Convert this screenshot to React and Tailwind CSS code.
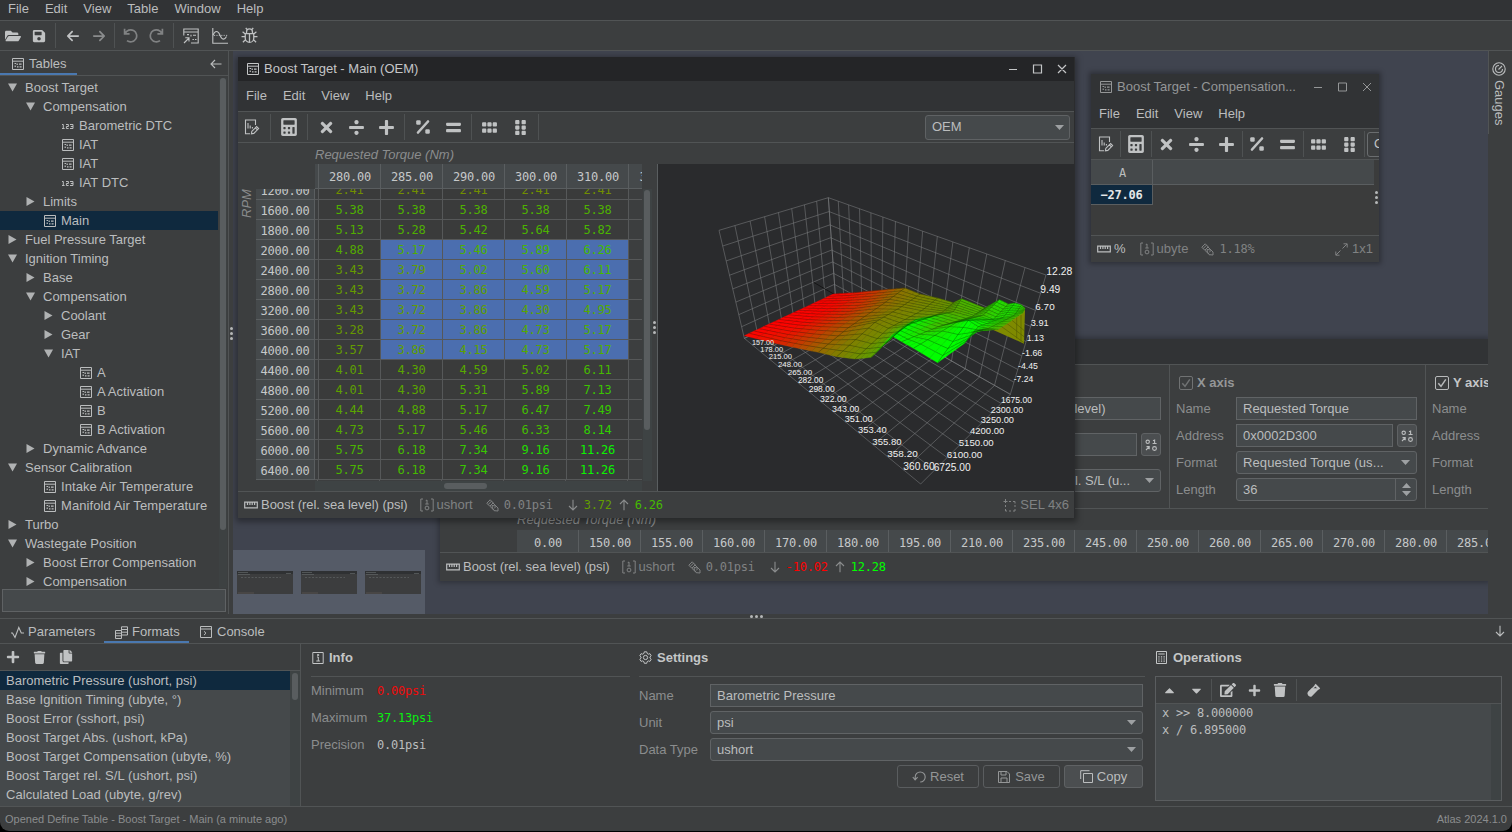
import React from "react";
import {
  FaFolderOpen, FaSave, FaCalculator, FaTimes, FaDivide, FaPlus, FaEquals,
  FaGripHorizontal, FaGripVertical, FaTrash, FaCopy, FaEdit, FaCaretUp, FaCaretDown,
} from "react-icons/fa";
import { FaArrowLeft, FaArrowRight } from "react-icons/fa6";

const MONO = "font-['DejaVu_Sans_Mono','Liberation_Mono',monospace] text-[12px] tracking-[-0.22px] whitespace-pre";

/* ---------- icons ---------- */
function Svg({ size = 14, sw = 1.1, className = "", vb = 16, children }) {
  return (
    <svg width={size} height={size} viewBox={`0 0 ${vb} ${vb}`} fill="none" stroke="currentColor" strokeWidth={sw} className={`shrink-0 ${className}`}>
      {children}
    </svg>
  );
}
const TableIcon = ({ size = 12, className }) => (
  <Svg size={size} vb={12} sw={1} className={className}>
    <path d="M.5 .5h11v11h-11zM.5 3.2h11" />
    <path d="M2.500 5.500h1.600M5.200 5.500v1.600M7 6.200h2.600M3.200 7.500v1.600M5 8.900h1.500M7.600 8.900h2" strokeWidth="1.200" />
  </Svg>
);
const NumIcon = () => (
  <svg width="12" height="12" viewBox="0 0 12 12" fill="none" stroke="currentColor" strokeWidth="1" className="shrink-0">
    <path d="M0 4.500h1.300v4M0 8.500h2.600M4 4.500h2.400v2H4.400v2h2.200M8 4.500h3v4H8M8.800 6.500H11" />
  </svg>
);
const ChangeTableIcon = () => (
  <Svg size={16} sw={1.100}>
    <path d="M.8 7.500V1h14.400v14H8M.8 4h14.400M1 15l5-5M2.300 9.800H6v3.800" />
    <path d="M4 6.600h2M8 6.800v1.600M10 7.200h3M9.500 11.500h1.400M12 11.500h1.500" />
  </Svg>
);
const ChartIcon = () => (
  <Svg size={16} sw={1.100}>
    <path d="M.8 0v15.200H16" />
    <path d="M1 7.200c2-5 5-5 7 0s4.500 5 6.500 1.200" />
    <path d="M2 7.400h14" strokeDasharray="1.200 1.200" strokeWidth=".9" />
  </Svg>
);
const BugIcon = () => (
  <Svg size={17} sw={1.200}>
    <path d="M4 6.200h8v4.300a4 4 0 0 1-8 0zM5.200 6V4.600a2.800 2.800 0 0 1 5.600 0V6M8 6.500v8M4 9H.5M12 9h3.500M4 6.500L1.500 4.500M12 6.500l2.500-2M4.300 11.800l-2.500 2.500M11.700 11.800l2.500 2.500M5.700 2.500L4.500 .8M10.300 2.500L11.500 .8" />
  </Svg>
);
const UndoIcon = ({ flip }) => (
  <Svg size={15} vb={15} sw={1.700} className={flip ? "-scale-x-100" : ""}>
    <path d="M1.600 .8v5h5M2.200 5.400A6 6 0 1 1 4 12.600" />
  </Svg>
);
const EditDocIcon = () => (
  <Svg size={16} sw={1.100}>
    <path d="M6 14.800H1.500V1H11.500V6M4 4v5.500M6.200 6.500v3M8.400 8v1.500" />
    <path d="M7.800 12.400l4.800-4.800 2 2-4.800 4.800-2.400.5zM11.400 8.800l2 2" />
  </Svg>
);
const PercentIcon = () => (
  <Svg size={16} sw={2.600}>
    <path d="M3 13.500L13 2.500" strokeLinecap="round" />
    <rect x="1.200" y="1.200" width="4.500" height="4.500" rx="1.200" fill="currentColor" stroke="none" />
    <rect x="10.300" y="10.300" width="4.500" height="4.500" rx="1.200" fill="currentColor" stroke="none" />
  </Svg>
);
const RulerIcon = () => (
  <svg width="14" height="8" viewBox="0 0 14 8" fill="none" stroke="currentColor" strokeWidth="1.200" className="shrink-0">
    <path d="M.7 1.200h12.600v5.600H.7zM3.500 1.200v2.800M5.900 1.200v2.800M8.200 1.200v2.800M10.600 1.200v2.800" />
  </svg>
);
const TypeIcon = () => (
  <Svg size={14} vb={14} sw={1}>
    <path d="M3 1H.8v12H3M11 1h2.200v12H11M5.700 2.700L7 2v4M5.300 6h3.400" />
    <circle cx="7" cy="10" r="1.900" />
  </Svg>
);
const PrecisionIcon = () => (
  <Svg size={13} vb={13} sw={1}>
    <path d="M.8 4.200L4.200 .8l3 3-3.400 3.400zM2.200 5.500l3.400-3.400M6.500 3.500l5.500 5.500M3.800 7.200l4.700 4.500M6 6.500l4 .5 2 2v3l-3.500-.3-2-2zM8 9.500l2-2" />
  </Svg>
);
const SelectIcon = () => (
  <Svg size={13} vb={13} sw={1}>
    <path d="M2.500 0v4M.5 2.500h4M6 2.500h2M10 2.500h2v2M12 6v2M12 10v2h-2M8 12H6M4 12H2.500v-2M2.500 8V6" />
  </Svg>
);
const ExpandIcon = () => (
  <Svg size={13} vb={13} sw={1}><path d="M8.500 .8h3.700v3.700M12 1L7.500 5.500M4.500 12.200H.8V8.500M1 12l4.500-4.500" /></Svg>
);
const WaveIcon = () => (
  <Svg size={13} vb={13} sw={1.100}><path d="M0 7h1.500L4 11.500 7.800 1.500 10.300 7H13" /></Svg>
);
const FormatsIcon = () => (
  <Svg size={13} vb={13} sw={1}>
    <path d="M.5 4.500h6v8h-6zM.5 7.200h6M.5 9.800h6M6.500 9H12.500V.8H6.500V4.500M6.500 3.500h6M6.500 6.200h6" />
  </Svg>
);
const ConsoleIcon = () => (
  <Svg size={12} vb={12} sw={1}><path d="M.5 .5h11v11H.5zM.5 3h11M4 5.300l2 1.900-2 1.900" /></Svg>
);
const InfoIcon = () => (
  <Svg size={12} vb={12} sw={1}><path d="M.8 .5h10.400v11H.8zM5 5h1.300v4M4.300 9h3.600M5.500 2.500h1.200v1H5.500z" /></Svg>
);
const GearIcon = () => (
  <Svg size={13} vb={16} sw={1.200}>
    <path d="M6.500 1h3l.5 2 1.500.9 2-.6 1.500 2.600L13.500 7.300v1.500l1.500 1.400-1.500 2.600-2-.6-1.500.9-.5 2h-3l-.5-2-1.500-.9-2 .6L1 10.200l1.500-1.400V7.300L1 5.900l1.500-2.600 2 .6L6 3z" />
    <circle cx="8" cy="8" r="2.600" />
  </Svg>
);
const CalcIcon = () => (
  <Svg size={13} vb={13} sw={1}>
    <path d="M1.500 .5h10v12h-10zM3.300 3h6.400" />
    <path d="M3.300 5.800h6.800M3.300 8h6.800M3.300 10.200h6.800" strokeDasharray="1.300 1.300" strokeWidth="1.200" />
  </Svg>
);
const BinIcon = () => (
  <Svg size={14} vb={14} sw={1.100}>
    <circle cx="3.700" cy="3.800" r="1.700" />
    <path d="M9 2.700l1.600-.7v3.500M8.600 5.500h4M2 12l3-3.200M2.500 8.600h2.700v2.600" />
    <circle cx="10.500" cy="10.500" r="1.900" />
  </Svg>
);
const GaugeIcon = () => (
  <Svg size={14} vb={14} sw={1.100}>
    <circle cx="7" cy="7" r="6.200" />
    <path d="M7 3.500a3.500 3.500 0 1 0 3.500 3.500M6.500 7.500l3.500-3.500" />
  </Svg>
);
const VialIcon = () => (
  <Svg size={14} vb={14} sw={1.400}>
    <path d="M1.500 9.500L8.500 2.500l3 3-7 7c-2 .8-3.800-1-3-3z" />
    <path d="M1.500 9.500L5 6h5.500l-6 6.500c-2 .8-3.800-1-3-3z" fill="currentColor" />
    <path d="M8 1.500l4.500 4.500" strokeWidth="1.800" />
  </Svg>
);
const Arrow = ({ dir, size = 12 }) => (
  <Svg size={size} vb={12} sw={1.100}>
    {dir === "down" && <path d="M6 .8v10.200M2 7l4 4 4-4" />}
    {dir === "up" && <path d="M6 11.200V1M2 5l4-4 4 4" />}
    {dir === "left" && <path d="M11.500 6H1M5 2L1 6l4 4" />}
  </Svg>
);
const Tri = ({ open }) => (
  <svg width="9" height="9" viewBox="0 0 9 9" className="shrink-0 fill-[#b0b2b3]">
    <path d={open ? "M0 .5h9L4.500 8.500z" : "M.5 0v9L8.500 4.500z"} />
  </svg>
);
const DownTri = () => <svg width="9" height="5" viewBox="0 0 9 5" className="shrink-0 fill-[#9da0a2]"><path d="M0 0h9L4.500 5z" /></svg>;

const Sep = ({ className = "" }) => <div className={`w-px shrink-0 bg-[#4f5253] ${className}`} />;
const Dots = ({ vertical }) => (
  <div className={`flex ${vertical ? "flex-col" : ""} gap-[2px]`}>
    {[0, 1, 2].map((i) => <div key={i} className="size-[3px] rounded-full bg-[#b5b7b8]" />)}
  </div>
);

/* ---------- data ---------- */
const TREE = [
  [0, "open", "Boost Target"], [1, "open", "Compensation"], [2, "num", "Barometric DTC"], [2, "table", "IAT"],
  [2, "table", "IAT"], [2, "num", "IAT DTC"], [1, "closed", "Limits"], [1, "table", "Main", true],
  [0, "closed", "Fuel Pressure Target"], [0, "open", "Ignition Timing"], [1, "closed", "Base"], [1, "open", "Compensation"],
  [2, "closed", "Coolant"], [2, "closed", "Gear"], [2, "open", "IAT"], [3, "table", "A"], [3, "table", "A Activation"],
  [3, "table", "B"], [3, "table", "B Activation"], [1, "closed", "Dynamic Advance"], [0, "open", "Sensor Calibration"],
  [1, "table", "Intake Air Temperature"], [1, "table", "Manifold Air Temperature"], [0, "closed", "Turbo"],
  [0, "open", "Wastegate Position"], [1, "closed", "Boost Error Compensation"], [1, "closed", "Compensation"],
];
const COLS = ["280.00", "285.00", "290.00", "300.00", "310.00"];
const ROWS = [
  ["1200.00", 2.41, 2.41, 2.41, 2.41, 2.41], ["1600.00", 5.38, 5.38, 5.38, 5.38, 5.38],
  ["1800.00", 5.13, 5.28, 5.42, 5.64, 5.82], ["2000.00", 4.88, 5.17, 5.46, 5.89, 6.26],
  ["2400.00", 3.43, 3.79, 5.02, 5.6, 6.11], ["2800.00", 3.43, 3.72, 3.86, 4.59, 5.17],
  ["3200.00", 3.43, 3.72, 3.86, 4.3, 4.95], ["3600.00", 3.28, 3.72, 3.86, 4.73, 5.17],
  ["4000.00", 3.57, 3.86, 4.15, 4.73, 5.17], ["4400.00", 4.01, 4.3, 4.59, 5.02, 6.11],
  ["4800.00", 4.01, 4.3, 5.31, 5.89, 7.13], ["5200.00", 4.44, 4.88, 5.17, 6.47, 7.49],
  ["5600.00", 4.73, 5.17, 5.46, 6.33, 8.14], ["6000.00", 5.75, 6.18, 7.34, 9.16, 11.26],
  ["6400.00", 5.75, 6.18, 7.34, 9.16, 11.26],
];
const BACK_COLS = ["0.00", "150.00", "155.00", "160.00", "170.00", "180.00", "195.00", "210.00", "235.00", "245.00", "250.00", "260.00", "265.00", "270.00", "280.00", "285.00"];
const FORMATS = [
  "Barometric Pressure (ushort, psi)", "Base Ignition Timing (ubyte, °)", "Boost Error (sshort, psi)",
  "Boost Target Abs. (ushort, kPa)", "Boost Target Compensation (ubyte, %)", "Boost Target rel. S/L (ushort, psi)",
  "Calculated Load (ubyte, g/rev)",
];
const heat = (t) => `rgb(${Math.round(255 * (1 - t))},${Math.round(255 * t)},0)`;
const cellColor = (v) => heat(Math.min(1, (v + 10.02) / 22.3));

/* ---------- surface plot ---------- */
function quadMap([p0, p1, p2, p3]) {
  const dx1 = p1[0] - p2[0], dx2 = p3[0] - p2[0], sx = p0[0] - p1[0] + p2[0] - p3[0];
  const dy1 = p1[1] - p2[1], dy2 = p3[1] - p2[1], sy = p0[1] - p1[1] + p2[1] - p3[1];
  const det = dx1 * dy2 - dx2 * dy1;
  const g = (sx * dy2 - dx2 * sy) / det, h = (dx1 * sy - sx * dy1) / det;
  const a = p1[0] - p0[0] + g * p1[0], b = p3[0] - p0[0] + h * p3[0];
  const d = p1[1] - p0[1] + g * p1[1], e = p3[1] - p0[1] + h * p3[1];
  return (u, v) => {
    const w = g * u + h * v + 1;
    return [(a * u + b * v + p0[0]) / w, (d * u + e * v + p0[1]) / w];
  };
}
function gridPath(corners, nu, nv) {
  const m = quadMap(corners);
  const seg = (p, q) => `M${p[0].toFixed(1)} ${p[1].toFixed(1)}L${q[0].toFixed(1)} ${q[1].toFixed(1)}`;
  let d = "";
  for (let i = 0; i <= nu; i++) d += seg(m(i / nu, 0), m(i / nu, 1));
  for (let j = 0; j <= nv; j++) d += seg(m(0, j / nv), m(1, j / nv));
  return d;
}
const P = { A: [192, 211], B: [520, 113], C: [1173, 345], a: [268, 535], b: [541, 405], c: [1066, 703], d: [797, 972] };
const GRID = gridPath([P.A, P.B, P.b, P.a], 8, 8) + gridPath([P.B, P.C, P.c, P.b], 15, 8) + gridPath([P.a, P.b, P.c, P.d], 8, 15);
const CURVES = [
  [[535, 402, 0], [600, 398, .06], [680, 390, .26], [750, 384, .46], [795, 402, .5], [848, 414, .54], [895, 428, .6], [920, 416, .72], [990, 444, .7], [1033, 419, .9], [1060, 432, .82], [1080, 429, .92], [1100, 435, .87], [1110, 445, .77]],
  [[446, 444, 0], [520, 446, .02], [600, 445, .18], [680, 435, .4], [740, 440, .5], [800, 452, .54], [860, 458, .58], [895, 455, .64], [950, 470, .72], [985, 465, .75], [1015, 478, .85], [1045, 472, .87], [1078, 466, .82], [1104, 458, .74]],
  [[357, 485, 0], [430, 495, .02], [500, 500, .17], [580, 503, .36], [660, 487, .5], [700, 505, .53], [745, 500, .7], [783, 479, 1], [850, 500, .72], [905, 487, .85], [940, 481, 1], [970, 500, .95], [1000, 505, .8], [1030, 508, .7]],
  [[268, 527, 0], [370, 552, .14], [430, 565, .28], [490, 577, .42], [545, 590, .5], [600, 597, .57], [648, 592, .62], [710, 527, 1], [740, 545, 1], [775, 565, 1], [848, 608, 1], [927, 551, 1], [948, 516, .95], [975, 512, .85]],
];
function mesh() {
  const out = [];
  const SU = 3, SV = 6;
  const at = (r, c, fu, fv) => {
    const [p, q, s, t] = [CURVES[r][c], CURVES[r][c + 1], CURVES[r + 1][c + 1], CURVES[r + 1][c]];
    return [0, 1, 2].map((k) => p[k] * (1 - fu) * (1 - fv) + q[k] * fu * (1 - fv) + s[k] * fu * fv + t[k] * (1 - fu) * fv);
  };
  for (let r = 0; r < 3; r++)
    for (let j = 0; j < SV; j++)
      for (let c = 0; c < 13; c++)
        for (let i = 0; i < SU; i++) {
          const q = [at(r, c, i / SU, j / SV), at(r, c, (i + 1) / SU, j / SV), at(r, c, (i + 1) / SU, (j + 1) / SV), at(r, c, i / SU, (j + 1) / SV)];
          out.push({ pts: q, color: heat(q.reduce((s, x) => s + x[2], 0) / 4), cross: i === 0 && c > 2 });
        }
  return out;
}
const pt = (a) => a.map((x) => `${x[0].toFixed(1)},${x[1].toFixed(1)}`).join(" ");
const MESH = mesh();
/* text, left, vertical centre, width */
const LABELS = [
  ["12.28", 1174, 334, 78], ["9.49", 1156, 388, 60], ["6.70", 1141, 440, 58], ["3.91", 1127, 488, 54], ["1.13", 1115, 533, 52],
  ["-1.66", 1101, 577, 61], ["-4.45", 1089, 617, 60], ["-7.24", 1076, 656, 59],
  ["157.00", 291, 547, 66], ["178.00", 316, 568, 68], ["215.00", 341, 589, 70], ["248.00", 369, 612, 72], ["265.00", 398, 636, 74],
  ["282.00", 429, 661, 76], ["298.00", 461, 688, 78], ["322.00", 495, 716, 80], ["343.00", 531, 745, 82], ["351.00", 569, 776, 84],
  ["353.40", 609, 809, 86], ["355.80", 652, 844, 88], ["358.20", 697, 881, 91], ["360.60", 745, 920, 94],
  ["1675.00", 1038, 720, 93], ["2300.00", 1007, 749, 98], ["3250.00", 977, 780, 100], ["4200.00", 945, 812, 103],
  ["5150.00", 911, 847, 105], ["6100.00", 875, 883, 107], ["6725.00", 836, 921, 111],
];
const labelSize = (t, w) => w / (t.length * 0.556 - (t[0] === "-" ? 0.5 : 0.278));
function Plot() {
  return (
    <svg width="416" height="327" viewBox="9 12 1248 981" className="block bg-[#2a2b2d]">
      <path d={GRID} stroke="#808284" strokeWidth="2.200" fill="none" opacity=".72" />
      <path d="M476 367L541 405" stroke="#111" strokeWidth="2.500" />
      <polygon points="1015,510 1070,470 1110,450 1107,551" fill="#7f8a00" />
      <path d="M1040 500L1107 548M1055 490L1107 530M1070 480L1108 512M1085 470L1085 535M1098 465L1098 545" stroke="#2a3300" strokeWidth="1.500" opacity=".6" />
      {MESH.map((m, i) => (
        <polygon key={i} points={pt(m.pts)} fill={m.color} stroke={m.color} strokeWidth="1" />
      ))}
      {MESH.map((m, i) => (
        <polyline key={i} points={pt(m.cross ? [m.pts[1], m.pts[0], m.pts[3]] : [m.pts[1], m.pts[0]])} fill="none" stroke="#001000" strokeWidth="1.700" opacity=".4" />
      ))}
      {LABELS.map(([t, x, y, w]) => (
        <text key={t} x={x} y={y + labelSize(t, w) * 0.36} textLength={w} fontSize={labelSize(t, w)} fill="#f0f0f0">{t}</text>
      ))}
    </svg>
  );
}

/* ---------- windows ---------- */
function TitleBar({ title, dim, className }) {
  return (
    <div className={`flex shrink-0 items-center ${className}`}>
      <TableIcon className="mr-[5px]" />
      <span className="grow">{title}</span>
      <svg width="58" height="10" viewBox="0 0 58 10" fill="none" stroke="currentColor" strokeWidth={dim ? 1 : 1.2} className="shrink-0">
        <path d="M0 5.500h8M24.500 1h8v8h-8zM49 1l8 8M57 1l-8 8" />
      </svg>
    </div>
  );
}
const MenuBar = ({ items, className = "" }) => (
  <div className={`flex shrink-0 items-center gap-[16px] bg-[#313335] ${className}`}>
    {items.map((m) => <span key={m}>{m}</span>)}
  </div>
);
const OPS = [FaTimes, FaDivide, FaPlus];
function StatusType({ type, prec }) {
  return (
    <>
      <span className="ml-[12px] flex items-center gap-[3px] text-[#808283]"><TypeIcon />{type}</span>
      <span className="ml-[13px] flex items-center gap-[5px] text-[#808283]"><PrecisionIcon /><span className={MONO}>{prec}</span></span>
    </>
  );
}
function MinMax({ lo, hi }) {
  return (
    <>
      <span className="ml-[14px] flex items-center gap-[5px] text-[#8b8d8e]"><Arrow dir="down" /><span className={MONO} style={{ color: cellColor(lo) }}>{lo.toFixed(2)}</span></span>
      <span className="ml-[6px] flex items-center gap-[5px] text-[#8b8d8e]"><Arrow dir="up" /><span className={MONO} style={{ color: cellColor(hi) }}>{hi.toFixed(2)}</span></span>
    </>
  );
}

function MainWindow() {
  return (
    <div className="absolute left-[5px] top-[6px] flex h-[461px] w-[837px] flex-col border-r border-[#2b2c2e] bg-[#3c3e3f] shadow-[0_2px_6px_2px_rgba(0,0,0,0.35)]">
      <TitleBar title="Boost Target - Main (OEM)" className="h-[24px] bg-[#242527] pl-[9px] pr-[7px] text-[#c4c6c7]" />
      <MenuBar items={["File", "Edit", "View", "Help"]} className="h-[30px] pl-[8px]" />
      <div className="flex h-[32px] shrink-0 items-center border-y border-[#515455] text-[#c0c2c3]">
        <div className="flex w-[32px] justify-center pr-[4px]"><EditDocIcon /></div>
        <Sep className="h-[26px]" />
        <div className="flex w-[36px] justify-center"><FaCalculator size={18} /></div>
        <Sep className="h-[26px]" />
        <div className="flex w-[96px] items-center gap-[13px] pl-[10px]">{OPS.map((I, i) => <I key={i} size={17} />)}</div>
        <Sep className="h-[26px]" />
        <div className="flex w-[66px] items-center gap-[14px] pl-[10px]"><PercentIcon /><FaEquals size={17} /></div>
        <Sep className="h-[26px]" />
        <div className="flex w-[66px] items-center gap-[14px] pl-[9px]"><FaGripHorizontal size={17} /><FaGripVertical size={17} /></div>
        <Sep className="h-[26px]" />
        <div className="ml-auto mr-[4px] flex h-[25px] w-[145px] items-center justify-between rounded-[3px] border border-[#5f6264] bg-[#45494b] pl-[6px] pr-[5px] text-[#bbbdbe]">OEM<DownTri /></div>
      </div>
      <div className="flex h-[348px] shrink-0 pl-px">
        <div className="flex h-full w-[404px] flex-col">
          <div className="h-[21px] shrink-0 pl-[76px] text-[13px] italic leading-[23px] text-[#8a8c8d]">Requested Torque (Nm)</div>
          <div className="flex">
            <div className="w-[17px] shrink-0 pt-[24px]">
              <div className="h-[30px] w-[16px] rotate-180 text-[13px] italic leading-[16px] text-[#8a8c8d] [writing-mode:vertical-rl]">RPM</div>
            </div>
            <div className="w-[386px] overflow-hidden">
              <div className="ml-[59px] flex h-[25px] w-[327px] overflow-hidden border-b border-[#5a5e60] bg-[#45494b]">
                <div className="w-[4px] shrink-0 border-r border-[#5a5e60]" />
                {COLS.map((c) => <div key={c} className={`w-[62px] shrink-0 border-r border-[#5a5e60] pl-px text-center leading-[26px] text-[#c6c8c9] ${MONO}`}>{c}</div>)}
                <div className={`w-[62px] shrink-0 pl-px text-center leading-[26px] text-[#c6c8c9] ${MONO}`}>320.00</div>
              </div>
              <div className="flex h-[292px] flex-col justify-end overflow-hidden">
                {ROWS.map((r, ri) => (
                  <div key={r[0]} className="flex h-[20px] shrink-0">
                    <div className={`w-[59px] shrink-0 border-b border-r border-[#5a5e60] bg-[#45494b] pt-px text-center leading-[20px] text-[#c6c8c9] ${MONO}`}>{r[0]}</div>
                    <div className="w-[4px] shrink-0 border-b border-r border-[#565859]" />
                    {r.slice(1).map((v, ci) => (
                      <div key={ci} className={`w-[62px] shrink-0 border-b border-r border-[#565859] text-center leading-[20px] ${MONO} ${ri > 2 && ri < 9 && ci > 0 ? "bg-[#4b6eaf] bg-clip-padding" : "bg-[#3a3b3b] bg-clip-padding"}`} style={{ color: cellColor(v) }}>{v.toFixed(2)}</div>
                    ))}
                    <div className="w-[14px] shrink-0 border-b border-[#565859]" />
                  </div>
                ))}
                <div className="ml-[58px] flex h-px shrink-0 gap-[3px]"><div className="w-px bg-[#565859]" />
                  {[0, 1, 2, 3, 4, 5].map((i) => <div key={i} className="mr-[58px] w-px shrink-0 bg-[#565859]" />)}
                </div>
              </div>
              <div className="ml-[59px] h-[10px] bg-[#3e4344] pl-[129px] pt-[2px]"><div className="h-[6px] w-[43px] rounded-full bg-[#595d5f]" /></div>
            </div>
          </div>
        </div>
        <div className="mt-[46px] h-[292px] w-[9px] shrink-0 bg-[#3e4344] pl-[1px] pt-[1px]"><div className="h-[240px] w-[6px] rounded-full bg-[#595d5f]" /></div>
        <div className="flex w-[5px] shrink-0 items-center justify-start pl-px pt-[20px]"><Dots vertical /></div>
        <div className="mt-[21px] w-[417px] shrink-0 border-l border-[#5a5e60]"><Plot /></div>
      </div>
      <div className="flex h-[27px] shrink-0 items-center border-t border-[#515455] pl-[6px] pr-[5px]">
        <RulerIcon /><span className="ml-[3px] tracking-[-0.03px]">Boost (rel. sea level) (psi)</span>
        <StatusType type="ushort" prec="0.01psi" />
        <MinMax lo={3.72} hi={6.26} />
        <span className="ml-auto flex items-center gap-[4px] text-[#808283]"><SelectIcon />SEL 4x6</span>
      </div>
    </div>
  );
}

function CompWindow() {
  return (
    <div className="absolute left-[858px] top-[23px] flex h-[188px] w-[288px] flex-col overflow-hidden bg-[#3b3c3c] shadow-[0_0_5px_2px_rgba(0,0,0,0.3)]">
      <TitleBar dim title="Boost Target - Compensation..." className="h-[26px] bg-[#313335] pl-[9px] pr-[7px] text-[#949697]" />
      <MenuBar items={["File", "Edit", "View", "Help"]} className="h-[28px] pl-[8px]" />
      <div className="flex h-[32px] shrink-0 items-center border-y border-[#515455] bg-[#3c3e3f] text-[#c0c2c3]">
        <div className="flex w-[29px] shrink-0 justify-center"><EditDocIcon /></div>
        <Sep className="h-[26px]" />
        <div className="flex w-[30px] shrink-0 justify-center"><FaCalculator size={18} /></div>
        <Sep className="h-[26px]" />
        <div className="flex w-[90px] shrink-0 items-center gap-[13px] pl-[6px]">{OPS.map((I, i) => <I key={i} size={17} className="shrink-0" />)}</div>
        <Sep className="h-[26px]" />
        <div className="flex w-[60px] shrink-0 items-center gap-[14px] pl-[6px]"><PercentIcon /><FaEquals size={17} className="shrink-0" /></div>
        <Sep className="h-[26px]" />
        <div className="flex w-[60px] shrink-0 items-center gap-[14px] pl-[6px]"><FaGripHorizontal size={17} className="shrink-0" /><FaGripVertical size={17} className="shrink-0" /></div>
        <Sep className="h-[26px]" />
        <div className="ml-[2px] flex h-[25px] w-[60px] shrink-0 items-center rounded-[3px] border border-[#6a6d6f] pl-[6px]">OEM</div>
      </div>
      <div className="flex h-[75px] shrink-0">
        <div className="w-[283px]">
          <div className="flex h-[25px] border-b border-[#5a5e60] bg-[#45494b]"><div className={`w-[62px] border-r border-[#5a5e60] pl-[2px] text-center leading-[26px] ${MONO}`}>A</div></div>
          <div className={`h-[20px] w-[62px] border-b border-r border-[#5a5e60] bg-[#0f293e] bg-clip-padding text-center font-bold leading-[20px] text-[#e4e6e8] ${MONO}`}>−27.06</div>
        </div>
        <div className="flex items-center pl-px"><Dots vertical /></div>
      </div>
      <div className="flex grow items-center border-t border-[#515455] bg-[#3c3e3f] pl-[6px] pr-[6px]">
        <RulerIcon /><span className="ml-[3px] mr-[2px]">%</span>
        <StatusType type="ubyte" prec="1.18%" />
        <span className="ml-auto flex items-center gap-[4px] text-[#808283]"><ExpandIcon />1x1</span>
      </div>
    </div>
  );
}

const Field = ({ children, className = "" }) => (
  <div className={`flex h-[23px] items-center border border-[#606365] bg-[#45494b] pl-[6px] ${className}`}>{children}</div>
);
const BinButton = () => <div className="flex h-[23px] w-[20px] shrink-0 items-center justify-center rounded-[3px] border border-[#5f6264] bg-[#4b4e50]"><BinIcon /></div>;
const Check = ({ dim }) => (
  <svg width="14" height="14" viewBox="0 0 14 14" fill="none" className={dim ? "text-[#707273]" : "text-[#b8babb]"} stroke="currentColor">
    <rect x=".5" y=".5" width="13" height="13" rx="1.500" strokeWidth="1" /><path d="M3.300 7.300l2.700 3 4.800-7" strokeWidth="1.500" />
  </svg>
);
const axisLabels = ["Name", "Address", "Format", "Length"];

function DefineWindow() {
  return (
    <div className="absolute left-[207px] top-[288px] flex h-[242px] w-[1048px] flex-col overflow-hidden bg-[#3c3e3f] shadow-[0_0_5px_2px_rgba(0,0,0,0.25)]">
      <div className="h-[26px] shrink-0 border-b border-[#515455] bg-[#313335]" />
      <div className="flex h-[144px] shrink-0 border-b border-[#515455]">
        <div className="flex w-[730px] shrink-0 flex-col items-end gap-[13px] border-r border-[#515455] pr-[8px] pt-[32px]">
          <Field className="w-[181px]"><span className="whitespace-nowrap">Boost (rel. sea level)</span></Field>
          <div className="flex w-[181px] gap-[4px]"><Field className="grow bg-[#3c3e3f]" /><BinButton /></div>
          <Field className="w-[181px] justify-between rounded-[3px] pr-[6px]"><span className="whitespace-nowrap">Boost Target rel. S/L (u...</span><DownTri /></Field>
        </div>
        <div className="w-[256px] shrink-0 border-r border-[#515455] pl-[6px] pr-[8px]">
          <div className="flex h-[32px] items-center gap-[4px] pl-[3px] pt-[3px] font-bold text-[#949697]"><Check dim />X axis</div>
          <div className="flex">
            <div className="flex w-[60px] shrink-0 flex-col gap-[4px] text-[#8b8d8e]">{axisLabels.map((l) => <div key={l} className="h-[23px] leading-[23px]">{l}</div>)}</div>
            <div className="flex grow flex-col gap-[4px]">
              <Field>Requested Torque</Field>
              <div className="flex gap-[4px]"><Field className="grow bg-[#3c3e3f]">0x0002D300</Field><BinButton /></div>
              <Field className="justify-between rounded-[3px] pr-[6px]"><span className="tracking-[0.1px]">Requested Torque (us...</span><DownTri /></Field>
              <Field className="justify-between rounded-[3px]">36
                <div className="flex h-full w-[21px] items-center justify-center border-l border-[#606365]">
                  <svg width="9" height="13" viewBox="0 0 9 13" className="fill-[#9da0a2]"><path d="M0 5h9L4.500 0zM0 8h9L4.500 13z" /></svg>
                </div>
              </Field>
            </div>
          </div>
        </div>
        <div className="shrink-0 pl-[6px]">
          <div className="flex h-[32px] items-center gap-[4px] whitespace-nowrap pl-[3px] pt-[3px] font-bold text-[#c4c6c7]"><Check />Y axis</div>
          <div className="flex flex-col gap-[4px] text-[#8b8d8e]">{axisLabels.map((l) => <div key={l} className="h-[23px] leading-[23px]">{l}</div>)}</div>
        </div>
      </div>
      <div className="flex h-[21px] shrink-0 items-center pl-[77px] text-[13px] italic text-[#8a8c8d]">Requested Torque (Nm)</div>
      <div className="flex h-[23px] shrink-0 border-b border-[#515455]">
        <div className="ml-[77px] flex overflow-hidden bg-[#45494b]">
          {BACK_COLS.map((c) => <div key={c} className={`w-[62px] shrink-0 border-r border-[#5a5e60] pl-px text-center leading-[26px] text-[#c6c8c9] ${MONO}`}>{c}</div>)}
        </div>
      </div>
      <div className="flex grow items-center pl-[6px]">
        <RulerIcon /><span className="ml-[3px] tracking-[-0.03px]">Boost (rel. sea level) (psi)</span>
        <StatusType type="ushort" prec="0.01psi" />
        <MinMax lo={-10.02} hi={12.28} />
      </div>
    </div>
  );
}

function Thumb() {
  return (
    <svg width="56" height="23" viewBox="0 0 56 23" className="block bg-[#3c3d3e]">
      <rect width="56" height="3" fill="#2f3133" />
      <path d="M1 1.500h10M1 3.500h12M49 2.500h5" stroke="#5c5f61" strokeWidth=".8" />
      <path d="M4 6.500h40" stroke="#5c5f61" strokeWidth=".8" strokeDasharray="2 1.500" />
      <path d="M1 22h16" stroke="#5a5550" strokeWidth=".8" />
    </svg>
  );
}

const SectionTitle = ({ icon, children }) => (
  <div className="flex h-[32px] shrink-0 items-center gap-[5px] pb-[5px] font-bold text-[#c4c6c7]"><span className="font-normal">{icon}</span>{children}</div>
);

export default function App() {
  return (
    <div className="h-[832px] w-[1512px] overflow-hidden bg-black font-['Liberation_Sans',Arial,sans-serif] text-[13px] leading-[16px] text-[#bbbdbe]">
      <div className="flex h-[831px] w-[1512px] flex-col overflow-hidden rounded-b-[9px] bg-[#3c3e3f]">
        <MenuBar items={["File", "Edit", "View", "Table", "Window", "Help"]} className="h-[20px] pb-[2px] pl-[8px]" />
        <div className="flex h-[31px] shrink-0 items-center border-y border-[#515455] text-[#c0c2c3]">
          <div className="flex w-[55px] items-center gap-[11px] pl-[5px]"><FaFolderOpen size={16} /><FaSave size={14} /></div>
          <Sep className="h-[25px]" />
          <div className="flex w-[58px] items-center gap-[12px] pl-[10px]"><FaArrowLeft size={14} /><FaArrowRight size={14} className="text-[#8a8c8d]" /></div>
          <Sep className="h-[25px]" />
          <div className="flex w-[58px] items-center gap-[11px] pl-[8px] text-[#808283]"><UndoIcon /><UndoIcon flip /></div>
          <Sep className="h-[25px]" />
          <div className="flex items-center gap-[13px] pl-[9px]"><ChangeTableIcon /><ChartIcon /><BugIcon /></div>
        </div>

        <div className="flex h-[563px] shrink-0">
          <div className="flex w-[229px] shrink-0 flex-col border-r border-[#515455]">
            <div className="flex h-[25px] shrink-0 items-end justify-between border-b border-[#515455] pr-[6px]">
              <div className="flex h-[24px] w-[77px] items-center gap-[5px] border-b-2 border-[#4a78b0] pl-[12px] pt-[3px]"><TableIcon />Tables</div>
              <div className="pb-[5px]"><Arrow dir="left" /></div>
            </div>
            <div className="mt-[2px] flex h-[510px] shrink-0 justify-between overflow-hidden">
              <div className="w-[218px]">
                {TREE.map(([d, k, label, sel], i) => {
                  const leaf = k === "table" || k === "num";
                  return (
                    <div key={i} className={`flex h-[19px] items-center ${sel ? "bg-[#0f293e]" : ""}`} style={{ paddingLeft: leaf ? 26 + d * 18 : 8 + d * 18 }}>
                      {k === "table" ? <TableIcon className="mr-[5px]" /> : k === "num" ? <span className="mr-[5px]"><NumIcon /></span> : <span className="mr-[8px]"><Tri open={k === "open"} /></span>}
                      <span className={`whitespace-nowrap ${label.includes("Air") ? "tracking-[0.08px]" : ""}`}>{label}</span>
                    </div>
                  );
                })}
              </div>
              <div className="mr-[1px] h-full w-[8px] bg-[#3d4142] pl-px"><div className="h-[452px] w-[6px] rounded-full bg-[#595d5f]" /></div>
            </div>
            <div className="ml-[2px] mt-[1px] h-[23px] w-[224px] border border-[#5f6264] bg-[#45494b]" />
          </div>
          <div className="flex w-[4px] shrink-0 items-center pl-px pt-[2px]"><Dots vertical /></div>
          <div className="relative w-[1255px] shrink-0 overflow-hidden bg-[#40444f]">
            <DefineWindow />
            <CompWindow />
            <MainWindow />
            <div className="absolute bottom-0 left-0 flex h-[64px] w-[192px] gap-[8px] bg-[#555b67] pl-[4px] pt-[21px]"><Thumb /><Thumb /><Thumb /></div>
          </div>
          <div className="flex w-[24px] shrink-0 flex-col">
            <div className="flex h-[83px] w-[20px] items-center gap-[4px] border-l border-[#515455] pt-[11px] [writing-mode:vertical-rl]"><GaugeIcon /><span>Gauges</span></div>
          </div>
        </div>

        <div className="flex h-[4px] shrink-0 items-center justify-center"><Dots /></div>
        <div className="flex h-[26px] shrink-0 justify-between border-y border-[#515455] pr-[6px]">
          <div className="flex">
            <div className="flex w-[104px] items-center gap-[4px] pl-[11px] pt-[2px]"><WaveIcon />Parameters</div>
            <div className="flex w-[85px] items-center gap-[4px] border-b-2 border-[#4a78b0] pl-[11px] pt-[4px]"><FormatsIcon />Formats</div>
            <div className="flex items-center gap-[5px] pl-[11px] pt-[2px]"><ConsoleIcon />Console</div>
          </div>
          <div className="flex items-center"><Arrow dir="down" /></div>
        </div>

        <div className="flex h-[162px] shrink-0">
          <div className="flex w-[301px] shrink-0 flex-col border-r border-[#515455]">
            <div className="flex h-[27px] shrink-0 items-center gap-[13px] border-b border-[#515455] pl-[6px] text-[#c0c2c3]"><FaPlus size={14} /><FaTrash size={13} /><FaCopy size={14} /></div>
            <div className="flex grow overflow-hidden">
              <div className="w-[290px] bg-[#45494b]">
                {FORMATS.map((f, i) => <div key={f} className={`h-[19px] whitespace-nowrap pl-[6px] leading-[19px] ${i === 0 ? "bg-[#0f293e]" : "tracking-[0.06px]"}`}>{f}</div>)}
              </div>
              <div className="w-[10px] bg-[#3e4344] pl-[2px] pt-[2px]"><div className="h-[27px] w-[6px] rounded-full bg-[#595d5f]" /></div>
            </div>
          </div>
          <div className="ml-[10px] w-[319px] shrink-0">
            <div className="pl-px"><SectionTitle icon={<InfoIcon />}>Info</SectionTitle></div>
            <div className="border-t border-[#515455] text-[#8b8d8e]">
              {[["Minimum", "0.00psi", "text-[#f00b0b]"], ["Maximum", "37.13psi", "text-[#08f00f]"], ["Precision", "0.01psi", "text-[#bbbdbe]"]].map(([l, v, c]) => (
                <div key={l} className="flex h-[27px] items-center"><span className="w-[66px]">{l}</span><span className={`${MONO} ${c}`}>{v}</span></div>
              ))}
            </div>
          </div>
          <div className="ml-[9px] w-[506px] shrink-0">
            <SectionTitle icon={<GearIcon />}>Settings</SectionTitle>
            <div className="flex flex-col gap-[4px] border-t border-[#515455] pr-[2px] pt-[7px]">
              <div className="flex items-center"><span className="w-[71px] text-[#8b8d8e]">Name</span><Field className="grow">Barometric Pressure</Field></div>
              <div className="flex items-center"><span className="w-[71px] text-[#8b8d8e]">Unit</span><Field className="grow justify-between rounded-[3px] pr-[6px]">psi<DownTri /></Field></div>
              <div className="flex items-center"><span className="w-[71px] text-[#8b8d8e]">Data Type</span><Field className="grow justify-between rounded-[3px] pr-[6px]">ushort<DownTri /></Field></div>
              <div className="flex justify-end gap-[4px] text-[#949697]">
                <div className="flex h-[23px] w-[82px] items-center justify-center gap-[4px] rounded-[3px] border border-[#5a5d5f]">
                  <Svg size={14} vb={14} sw={1.100}><path d="M.8 7l2.300 3 2.500-2.800M3.200 9.800V7a5 5 0 1 1 5 5" /></Svg>Reset</div>
                <div className="flex h-[23px] w-[77px] items-center justify-center gap-[5px] rounded-[3px] border border-[#5a5d5f]">
                  <Svg size={12} vb={12} sw={1}><path d="M.5 .5h8.500L11.500 3v8.500H.5zM3 .5v3.500h5V.5M3 11.500V7h6v4.500" /></Svg>Save</div>
                <div className="flex h-[23px] w-[79px] items-center justify-center gap-[4px] rounded-[3px] border border-[#5f6264] bg-[#4b4e50] text-[#bbbdbe]">
                  <Svg size={13} vb={13} sw={1}><path d="M3.500 3.500h9v9h-9zM.7 9V.7H9.500" /></Svg>Copy</div>
              </div>
            </div>
          </div>
          <div className="ml-[10px] w-[347px] shrink-0">
            <SectionTitle icon={<CalcIcon />}>Operations</SectionTitle>
            <div className="flex h-[125px] flex-col border border-[#5a5d5f]">
              <div className="flex h-[27px] shrink-0 items-center border-b border-[#515455] text-[#c0c2c3]">
                <div className="flex w-[55px] items-center gap-[12px] pl-[6px]"><FaCaretUp size={15} /><FaCaretDown size={15} /></div>
                <Sep className="h-[22px]" />
                <div className="flex w-[84px] items-center gap-[12px] pl-[8px]"><FaEdit size={16} /><FaPlus size={13} /><FaTrash size={14} /></div>
                <Sep className="h-[22px]" />
                <div className="pl-[10px]"><VialIcon /></div>
              </div>
              <div className="flex grow">
                <div className="grow bg-[#45494b] pl-[6px] pt-px">
                  <div className={`leading-[17px] ${MONO}`}>{"x >> 8.000000"}</div>
                  <div className={`leading-[17px] ${MONO}`}>x / 6.895000</div>
                </div>
                <div className="w-[10px] bg-[#3e4344]" />
              </div>
            </div>
          </div>
        </div>
        <div className="flex grow items-center justify-between border-t border-[#515455] pl-[5px] pr-[5px] text-[11px] text-[#8b8d8e]">
          <span>Opened Define Table - Boost Target - Main (a minute ago)</span><span>Atlas 2024.1.0</span>
        </div>
      </div>
    </div>
  );
}
